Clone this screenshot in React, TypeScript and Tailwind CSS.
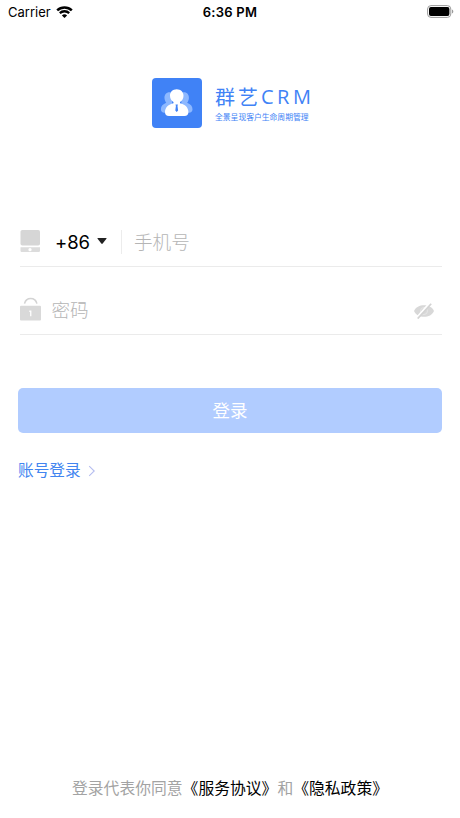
import { useState } from "react";

function StatusBar() {
  return (
    <div className="grid grid-cols-3 items-center h-6 pl-2 pr-1.5 text-black">
      <div className="flex items-center gap-[5px]">
        <span className="text-[13px] leading-6">Carrier</span>
        <svg className="mb-px" width="17" height="12" viewBox="0 0 17 12" fill="none">
          <path d="M1.2 4.3C5.2.5 11.8.5 15.8 4.3" stroke="currentColor" strokeWidth="2.5" />
          <path d="M3.8 7.1c2.6-2.5 6.8-2.5 9.4 0" stroke="currentColor" strokeWidth="2.3" />
          <path d="M8.5 12 5.9 9.4c1.4-1.4 3.8-1.4 5.2 0z" fill="currentColor" />
        </svg>
      </div>
      <span className="-ml-[2px] text-center text-[13px] leading-6 font-semibold tracking-[0.25px]">6:36 PM</span>
      <svg className="justify-self-end mb-px" width="27" height="13" viewBox="0 0 27 13" fill="none">
        <rect x="0.6" y="0.6" width="23.2" height="11.8" rx="3.4" stroke="#9b9b9b" />
        <rect x="2" y="2" width="20.4" height="9" rx="1.9" fill="#000" />
        <path d="M25 4.5c1.8.7 1.8 3.3 0 4z" fill="#9b9b9b" />
      </svg>
    </div>
  );
}

function Logo() {
  return (
    <svg width="50" height="50" viewBox="0 0 50 50">
      <rect width="50" height="50" rx="4" fill="#4082f6" />
      {/* People behind */}
      <path
        d="M18 14.3c-3.8-.2-5.8 2.6-5.5 5.9.2 2 .9 3.4 1.8 4.6-3.4 1.3-5.4 3.4-5.4 6.4 0 2.3 1.3 3.5 3.6 3.5H20V14.7z"
        fill="#8db8ff"
      />
      <path
        d="M31.4 14.3c3.8-.2 5.8 2.6 5.5 5.9-.2 2-.9 3.4-1.8 4.6 3.4 1.3 5.4 3.4 5.4 6.4 0 2.3-1.3 3.5-3.6 3.5h-7.5V14.7z"
        fill="#8db8ff"
      />
      {/* Person in front */}
      <path
        d="M24.7 11.3c-4 0-6.7 2.8-6.7 6.4 0 2.8 1.4 5 3.5 6.3v1.3c-5 1-8.5 4.2-8.5 8.8 0 2.7 1.3 4 4 4h15.4c2.7 0 4-1.3 4-4 0-4.6-3.4-7.8-8.4-8.8V24c2.1-1.3 3.5-3.5 3.5-6.3 0-3.6-2.8-6.4-6.8-6.4z"
        fill="#fff"
      />
      <path d="M23.5 26.5h2.4l-.4 1.6.6 4.4-1.4 1.4-1.4-1.4.6-4.4z" fill="#4082f6" />
    </svg>
  );
}

function PhoneIcon() {
  return (
    <svg width="20" height="23" viewBox="0 0 20 23">
      <rect x="0.5" width="19.5" height="15.5" rx="1.8" fill="#d6d6d6" />
      <path d="M.5 17.2H20v3.6a1.2 1.2 0 0 1-1.2 1.2H1.7a1.2 1.2 0 0 1-1.2-1.2z" fill="#dcdcdc" />
      <circle cx="10" cy="19.7" r="1.6" fill="#fff" />
    </svg>
  );
}

function LockIcon() {
  return (
    <svg width="22" height="24" viewBox="0 0 22 24" fill="none">
      <path d="M4.5 6.7C5.3 3.2 7.7 1.4 10.7 1.4s5.4 1.8 6.2 5.3" stroke="#d3d3d3" strokeWidth="1.5" />
      <rect x="0" y="8.8" width="21" height="14.6" rx="1" fill="#d9d9d9" />
      <path d="M9.3 13.5h2.1v5.8h-1.3v-4.2h-.8z" fill="#fff" />
    </svg>
  );
}

function EyeOffIcon() {
  return (
    <svg width="20" height="16" viewBox="0 0 20 16" fill="none">
      <path d="M0 8c3-7.8 17-7.8 20 0-3 7.8-17 7.8-20 0z" fill="#d8d8d8" />
      <circle cx="10" cy="8" r="3.5" stroke="#e8e8e8" strokeWidth="0.8" />
      <path d="M3 14.5 15.7 0" stroke="#fff" strokeWidth="2" />
      <path d="M3.7 15.6 17.2.7" stroke="#d3d3d3" strokeWidth="1.7" />
    </svg>
  );
}

export default function App() {
  const [phone, setPhone] = useState("");
  const [password, setPassword] = useState("");
  const [visible, setVisible] = useState(false);

  return (
    <div className="flex flex-col h-screen bg-white font-[Inter,'Noto_Sans_CJK_SC',sans-serif]">
      <StatusBar />

      {/* Brand */}
      <div className="flex items-start ml-[151.5px] mt-[54px] h-[50px] text-[#4082f6]">
        <Logo />
        <div className="ml-[13.5px] pt-[7px] whitespace-nowrap">
          <h1 className="flex h-6 items-center text-[20px] leading-6 font-['Noto_Sans_CJK_SC',sans-serif]">
            <span className="tracking-[3px]">群艺</span>
            <span className="tracking-[3.5px] font-['Open_Sans',sans-serif]">CRM</span>
          </h1>
          <p className="mt-[3px] text-[7.8px] leading-[10px]">全景呈现客户生命周期管理</p>
        </div>
      </div>

      {/* Form */}
      <form className="mt-[88px] px-[18px]" onSubmit={(e) => e.preventDefault()}>
        <div className="flex items-center h-[51px] ml-[2px] border-b border-[#ebebeb]">
          <PhoneIcon />
          <button type="button" className="flex items-center ml-[15px] text-black">
            <span className="w-[35px] mr-[7px] pt-px text-[18.5px] leading-6 tracking-[-0.1px]">+86</span>
            <svg width="10" height="6" viewBox="0 0 10 6">
              <path d="M1 0h8q1 0 .4.8L5.7 5.5q-.7.8-1.4 0L.6.8Q0 0 1 0z" fill="#222" />
            </svg>
          </button>
          <div className="ml-[14px] mr-3 mt-px h-6 w-px bg-[#ececec]" />
          <input
            type="tel"
            value={phone}
            onChange={(e) => setPhone(e.target.value)}
            placeholder="手机号"
            className="flex-1 min-w-0 pt-[3px] text-[18.6px] font-light outline-none placeholder:text-[#b5b5b5]"
          />
        </div>

        <div className="flex items-center h-[51px] mt-[17px] ml-[2px] pr-2 border-b border-[#ebebeb]">
          <LockIcon />
          <input
            type={visible ? "text" : "password"}
            value={password}
            onChange={(e) => setPassword(e.target.value)}
            placeholder="密码"
            className="flex-1 min-w-0 ml-[9.5px] pt-[4px] text-[18.6px] font-light outline-none placeholder:text-[#b5b5b5]"
          />
          <button type="button" className="pt-[3px]" onClick={() => setVisible(!visible)}>
            <EyeOffIcon />
          </button>
        </div>

        <button
          type="submit"
          className="block mt-[53px] pt-[2px] w-full h-[44.5px] rounded-[5px] bg-[#b1ccff] text-white text-[17.5px]"
        >
          登录
        </button>
      </form>

      <button type="button" className="flex items-center self-start ml-[18px] mt-[26.5px] text-[#4285f0]">
        <span className="text-[15.7px] leading-6">账号登录</span>
        <svg className="ml-[7px]" width="8" height="12" viewBox="0 0 8 12" fill="none">
          <path d="m1.2 1.2 5 4.8-5 4.8" stroke="#b5bdf0" strokeWidth="1.1" />
        </svg>
      </button>

      {/* Agreement */}
      <p className="mt-auto mb-[17px] ml-[72px] whitespace-nowrap text-[15.8px] leading-6 text-[#a3a3a3]">
        登录代表你同意<a className="text-black">《服务协议》</a>和<a className="text-black">《隐私政策》</a>
      </p>
    </div>
  );
}
